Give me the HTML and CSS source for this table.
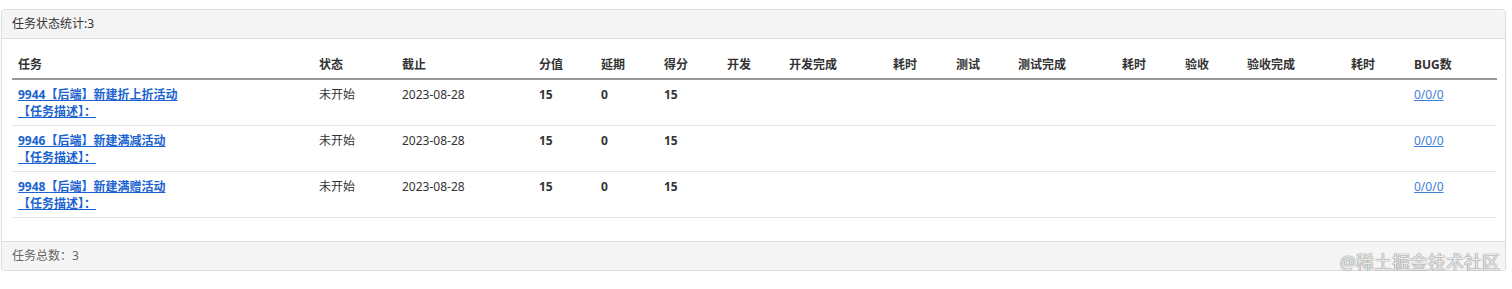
FILE: index.html
```html
<!DOCTYPE html>
<html lang="zh-CN">
<head>
<meta charset="utf-8">
<title>任务状态统计</title>
<link rel="stylesheet" href="styles.css">
</head>
<body>
<div class="panel">
  <div class="panel-heading">任务状态统计:3</div>
  <div class="panel-body">
    <table class="task-table">
      <colgroup>
        <col style="width:301px"><col style="width:83px"><col style="width:137px">
        <col style="width:62px"><col style="width:63px"><col style="width:63px">
        <col style="width:62px"><col style="width:104px"><col style="width:63px">
        <col style="width:62px"><col style="width:104px"><col style="width:63px">
        <col style="width:62px"><col style="width:104px"><col style="width:63px">
        <col style="width:89px">
      </colgroup>
      <thead>
        <tr>
          <th>任务</th><th>状态</th><th>截止</th><th>分值</th><th>延期</th><th>得分</th>
          <th>开发</th><th>开发完成</th><th>耗时</th><th>测试</th><th>测试完成</th><th>耗时</th>
          <th>验收</th><th>验收完成</th><th>耗时</th><th>BUG数</th>
        </tr>
      </thead>
      <tbody>
        <tr>
          <td><a class="task-link" href="#">9944【后端】新建折上折活动</a><br><a class="task-link" href="#">【任务描述】：</a></td>
          <td>未开始</td><td>2023-08-28</td><td class="num">15</td><td class="num">0</td><td class="num">15</td>
          <td></td><td></td><td></td><td></td><td></td><td></td><td></td><td></td><td></td>
          <td><a class="bug-link" href="#">0/0/0</a></td>
        </tr>
        <tr>
          <td><a class="task-link" href="#">9946【后端】新建满减活动</a><br><a class="task-link" href="#">【任务描述】：</a></td>
          <td>未开始</td><td>2023-08-28</td><td class="num">15</td><td class="num">0</td><td class="num">15</td>
          <td></td><td></td><td></td><td></td><td></td><td></td><td></td><td></td><td></td>
          <td><a class="bug-link" href="#">0/0/0</a></td>
        </tr>
        <tr>
          <td><a class="task-link" href="#">9948【后端】新建满赠活动</a><br><a class="task-link" href="#">【任务描述】：</a></td>
          <td>未开始</td><td>2023-08-28</td><td class="num">15</td><td class="num">0</td><td class="num">15</td>
          <td></td><td></td><td></td><td></td><td></td><td></td><td></td><td></td><td></td>
          <td><a class="bug-link" href="#">0/0/0</a></td>
        </tr>
      </tbody>
    </table>
  </div>
  <div class="panel-footer">任务总数：3</div>
  <div class="watermark">@稀土掘金技术社区</div>
</div>
</body>
</html>
```
FILE: styles.css
```css
html, body {
  margin: 0;
  padding: 0;
  background: #ffffff;
}
body {
  font-family: "Noto Sans", "Noto Sans CJK SC", sans-serif;
  font-size: 12px;
  color: #333333;
}
.panel {
  position: relative;
  margin: 9px 6px 0 1px;
  border: 1px solid #dddddd;
  border-radius: 4px;
  background: #ffffff;
  box-shadow: 0 1px 2px rgba(0,0,0,0.05);
}
.panel-heading {
  padding: 5px 10px;
  line-height: 18px;
  background: #f5f5f5;
  border-bottom: 1px solid #dddddd;
  border-radius: 3px 3px 0 0;
  color: #333333;
}
.panel-body {
  padding: 12px 8px 0 10px;
}
.task-table {
  width: 1485px;
  table-layout: fixed;
  border-collapse: collapse;
  border-spacing: 0;
  margin-bottom: 23px;
}
.task-table th {
  text-align: left;
  font-weight: bold;
  padding: 5px 6px;
  line-height: 17px;
  border-bottom: 2px solid #999999;
  white-space: nowrap;
}
.task-table td {
  padding: 5.5px 6px 5px;
  line-height: 17.3px;
  vertical-align: top;
  border-bottom: 1px solid #e6e6e6;
  white-space: nowrap;
}
.task-table td.num {
  font-weight: bold;
}
.task-link {
  color: #1b63d0;
  font-weight: bold;
  text-decoration: underline;
}
.bug-link {
  color: #3f80d8;
  text-decoration: underline;
}
.panel-footer {
  padding: 5px 10px;
  line-height: 18px;
  background: #f5f5f5;
  border-top: 1px solid #dddddd;
  border-radius: 0 0 3px 3px;
  color: #666666;
}
.watermark {
  position: absolute;
  right: 5px;
  bottom: -4px;
  font-size: 18px;
  line-height: 24px;
  color: rgba(255,255,255,0.85);
  text-shadow: 0 0 1px #777777, 0 0 1px #777777;
  letter-spacing: 0;
}
```
